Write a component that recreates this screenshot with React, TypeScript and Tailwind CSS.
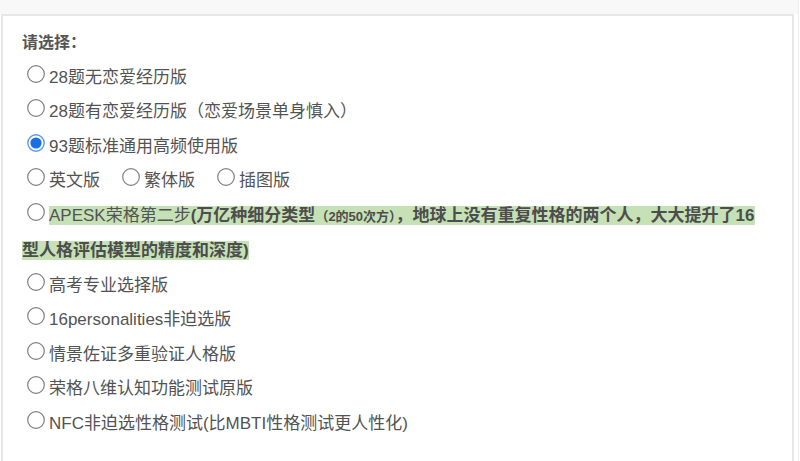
import React from "react";

const font = { fontFamily: '"Liberation Sans", "Noto Sans CJK SC", sans-serif' };

function Radio({ checked = false }: { checked?: boolean }) {
  return (
    <svg
      width="18"
      height="18"
      viewBox="0 0 18 18"
      className="inline-block ml-[5px] mr-[4px] align-baseline"
    >
      {checked ? (
        <>
          <circle cx="9" cy="9" r="8.2" fill="#fff" stroke="#5b9bf0" strokeWidth="1.4" />
          <circle cx="9" cy="9" r="5.6" fill="#1b6fe6" />
        </>
      ) : (
        <circle cx="9" cy="9" r="8.3" fill="#fff" stroke="#7f7f7f" strokeWidth="1.2" />
      )}
    </svg>
  );
}

function Row({ children }: { children: React.ReactNode }) {
  return <div className="leading-[34.5px]">{children}</div>;
}

export default function App() {
  return (
    <div className="flex h-[461px] w-[800px] bg-white overflow-hidden" style={font}>
      <div className="flex w-[798px] flex-col">
        <div className="h-[14px] bg-[#f8f8f8]" />
        <div className="flex flex-1 pl-[1px] pr-[4px]">
          <div className="flex-1 border-x-2 border-t-2 border-[#e7e7e7] bg-white pl-[19px] pr-[4px] pt-[10px] text-[17px] text-[#535353]">
            <div className="leading-[34.5px] text-[16px] font-semibold text-[#555]">请选择：</div>
            <Row>
              <Radio />28题无恋爱经历版
            </Row>
            <Row>
              <Radio />28题有恋爱经历版（恋爱场景单身慎入）
            </Row>
            <Row>
              <Radio checked />93题标准通用高频使用版
            </Row>
            <Row>
              <Radio />英文版<span className="inline-block w-[17px]" />
              <Radio />繁体版<span className="inline-block w-[17px]" />
              <Radio />插图版
            </Row>
            <Row>
              <Radio />
              <span className="bg-[#c6e1b6]">
                APESK荣格第二步
                <b className="font-bold text-[#4d4d4d]">
                  (万亿种细分类型<span className="text-[13px]">（2的50次方）</span>，地球上没有重复性格的两个人，大大提升了16
                  <br />
                  型人格评估模型的精度和深度)
                </b>
              </span>
            </Row>
            <Row>
              <Radio />高考专业选择版
            </Row>
            <Row>
              <Radio />16personalities非迫选版
            </Row>
            <Row>
              <Radio />情景佐证多重验证人格版
            </Row>
            <Row>
              <Radio />荣格八维认知功能测试原版
            </Row>
            <Row>
              <Radio />NFC非迫选性格测试(比MBTI性格测试更人性化)
            </Row>
          </div>
        </div>
      </div>
      <div className="w-[1px] bg-[#ececec]" />
      <div className="w-[1px] bg-white" />
    </div>
  );
}
